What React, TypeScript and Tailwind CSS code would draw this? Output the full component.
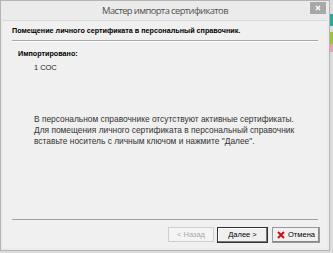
export default function App() {
  return (
    <div className="w-[333px] h-[253px] bg-[#dcdcdc] overflow-hidden font-['Liberation_Sans',sans-serif] flex">
      <div className="w-[330px] h-[251px] bg-[#ebebeb] border border-[#b4b4b4] flex flex-col shrink-0">
        {/* Title bar */}
        <div className="h-[19px] flex items-center relative shrink-0">
          <div className="flex-1 text-center text-[9.4px] tracking-[-0.6px] text-[#505050] font-['Open_Sans',sans-serif] leading-none">
            Мастер импорта сертификатов
          </div>
          <div className="absolute right-[3px] top-[1px] w-[16px] h-[12px] bg-[#a8a8a8] flex items-center justify-center">
            <svg width="6" height="6" viewBox="0 0 6 6">
              <path d="M1 1L5 5M5 1L1 5" stroke="#fff" strokeWidth="1.3" />
            </svg>
          </div>
        </div>
        {/* Body */}
        <div className="flex-1 mx-[2px] mb-[2px] bg-[#f0f0f0] border-t border-[#dadada] flex flex-col px-[9px]">
          <div className="pt-[5px] h-[19px] text-[7.2px] font-bold text-black">
            Помещение личного сертификата в персональный справочник.
          </div>
          <div className="h-px bg-[#a8a8a8] border-b border-white box-content" />
          <div className="pl-[6px] pt-[7px] text-[7.2px] font-bold text-black leading-[10px]">Импортировано:</div>
          <div className="pl-[22px] pt-[4px] text-[7.5px] text-[#222] leading-[10px]">1 СОС</div>
          <div className="pl-[22px] pt-[41px] text-[8.4px] leading-[11px] text-[#333]">
            <div>В персональном справочнике отсутствуют активные сертификаты.</div>
            <div>Для помещения личного сертификата в персональный справочник</div>
            <div>вставьте носитель с личным ключом и нажмите "Далее".</div>
          </div>
          <div className="flex-1" />
          <div className="h-px bg-[#a0a0a0] mb-[7px]" />
          <div className="flex justify-end pb-[5px] -mr-[2px]">
            <div className="w-[46px] h-[15px] border border-[#cfcfcf] bg-[#f4f4f4] text-[7.5px] text-[#a8a8a8] flex items-center justify-center mr-[3px]">
              &lt; Назад
            </div>
            <div className="w-[51px] h-[16px] border border-[#333] shadow-[inset_-1px_-1px_0_#777,inset_1px_1px_0_#fff] bg-[#f0f0f0] text-[7.5px] text-black flex items-center justify-center mr-[4px]">
              Далее &gt;
            </div>
            <div className="w-[48px] h-[16px] border border-[#999] shadow-[inset_-1px_-1px_0_#888] bg-[#f0f0f0] text-[7.5px] text-black flex items-center justify-center gap-[3px]">
              <svg width="8" height="8" viewBox="0 0 8 8">
                <path d="M1 1L7 7M7 1L1 7" stroke="#d01010" strokeWidth="2" />
              </svg>
              Отмена
            </div>
          </div>
        </div>
      </div>
      {/* desktop showing through at the right edge */}
      <div className="flex-1 flex flex-col">
        <div className="h-[14px]" />
        <div className="h-[12px] bg-[#2aa89a]" />
        <div className="h-[6px]" />
        <div className="h-[12px] bg-[#9bc43a]" />
        <div className="h-[8px] bg-[#e8a0b8]" />
        <div className="flex-1" />
      </div>
    </div>
  );
}
